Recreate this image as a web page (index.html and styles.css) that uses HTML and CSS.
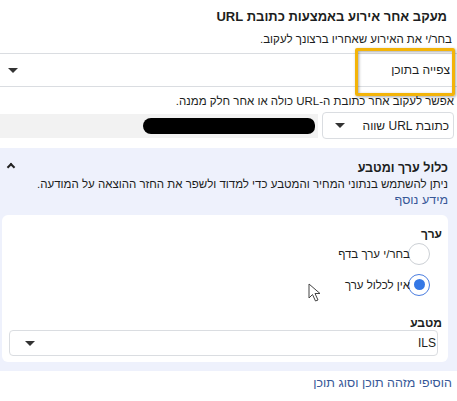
FILE: index.html
```html
<!DOCTYPE html>
<html lang="he" dir="rtl">

<head>
    <meta charset="UTF-8">
    <title>מעקב אחר אירוע</title>
    <link rel="stylesheet" href="styles.css">
</head>

<body>
    <div class="page">
        <h1 class="title">מעקב אחר אירוע באמצעות כתובת URL</h1>
        <p class="hint">בחר/י את האירוע שאחריו ברצונך לעקוב.</p>

        <!-- event picker -->
        <div class="event-select">
            <span class="value">צפייה בתוכן</span>
            <span class="caret"></span>
            <div class="highlight"></div>
        </div>

        <p class="hint url-hint">אפשר לעקוב אחר כתובת ה-URL כולה או אחר חלק ממנה.</p>

        <div class="url-row">
            <div class="rule-select">
                <span class="value">כתובת URL שווה</span>
                <span class="caret"></span>
            </div>
            <div class="url-input">
                <span class="redacted"></span>
            </div>
        </div>

        <!-- value & currency -->
        <section class="value-panel">
            <div class="panel-head">
                <div>
                    <h3>כלול ערך ומטבע</h3>
                    <p>ניתן להשתמש בנתוני המחיר והמטבע כדי למדוד ולשפר את החזר ההוצאה על המודעה.</p>
                    <a href="#" class="link">מידע נוסף</a>
                </div>
                <span class="chevron"></span>
            </div>

            <div class="card">
                <h4>ערך</h4>
                <label class="radio first">
                    <span class="dot"></span>
                    <span>בחר/י ערך בדף</span>
                </label>
                <label class="radio checked">
                    <span class="dot"></span>
                    <span>אין לכלול ערך</span>
                </label>
                <svg class="cursor" width="14" height="20" viewBox="0 0 14 20">
                    <path d="M1 1 L1 15 L4.5 11.5 L7.5 18 L10 17 L7 10.5 L12 10.5 Z" fill="#fff" stroke="#444" stroke-width="1" stroke-linejoin="round"/>
                </svg>

                <h4 class="currency-label">מטבע</h4>
                <div class="currency-select">
                    <span class="value">ILS</span>
                    <span class="caret"></span>
                </div>
            </div>
        </section>

        <a href="#" class="link add-link">הוסיפי מזהה תוכן וסוג תוכן</a>
    </div>
</body>

</html>
```

FILE: styles.css
```css
* {
    margin: 0;
    padding: 0;
    box-sizing: border-box;
}

body {
    background-color: #fff;
    font-family: "Liberation Sans", Arial, sans-serif;
    color: #1c1e21;
    font-size: 11.5px;
    width: 457px;
    overflow: hidden;
}

.page {
    padding-top: 7px;
}

.title {
    font-size: 13px;
    font-weight: bold;
    margin-right: 10px;
    line-height: 20px;
}

.hint {
    line-height: 16px;
    margin-right: 5px;
}

.title + .hint {
    margin-top: 4px;
}

.caret {
    width: 0;
    height: 0;
    border-left: 5px solid transparent;
    border-right: 5px solid transparent;
    border-top: 5px solid #333;
}

.event-select {
    position: relative;
    margin-top: 6px;
    height: 34px;
    border-top: 1px solid #dadde1;
    border-bottom: 1px solid #dadde1;
    display: flex;
    align-items: center;
    justify-content: space-between;
    padding: 0 7px 0 9px;
    margin-left: -1px;
    font-size: 12px;
}

.highlight {
    position: absolute;
    top: -6px;
    right: 2px;
    width: 100px;
    height: 48px;
    border: 3px solid #f3b409;
    border-radius: 2px;
    box-shadow: 1px 1px 3px rgba(0, 0, 0, 0.35), inset 1px 1px 3px rgba(0, 0, 0, 0.35);
}

.url-hint {
    margin-top: 6px;
    margin-right: 3px;
}

.url-row {
    display: flex;
    align-items: center;
    margin-top: 3px;
    gap: 4px;
    padding-right: 3px;
}

.rule-select {
    width: 132px;
    height: 27px;
    border: 1px solid #dadde1;
    border-radius: 4px;
    background-color: #fff;
    display: flex;
    align-items: center;
    justify-content: space-between;
    padding: 0 4px 0 12px;
    font-size: 12px;
}

.url-input {
    flex: 1;
    height: 24px;
    background-color: #f2f2f2;
    display: flex;
    align-items: center;
}

.redacted {
    width: 172px;
    height: 16px;
    margin-right: 3px;
    background-color: #000;
    border-radius: 9px 8px 8px 9px;
}

.value-panel {
    margin-top: 9px;
    background-color: #eef1fc;
    padding: 12px 9px 9px 0;
}

.panel-head {
    display: flex;
    justify-content: space-between;
    align-items: flex-start;
    margin-bottom: 7px;
}

.panel-head h3 {
    font-size: 12.5px;
    font-weight: bold;
    line-height: 16px;
}

.panel-head p {
    line-height: 16px;
}

.chevron {
    width: 6px;
    height: 6px;
    border-top: 2px solid #222;
    border-left: 2px solid #222;
    transform: rotate(45deg);
    margin: 4px 0 0 8px;
}

.link {
    color: #385898;
    text-decoration: none;
    font-size: 12.5px;
    line-height: 16px;
    display: inline-block;
}

.card {
    position: relative;
    background-color: #fff;
    border-radius: 6px;
    margin-left: 2px;
    padding: 11px 6px 6px 7px;
}

.card h4 {
    font-size: 12px;
    font-weight: bold;
    line-height: 16px;
}

.radio {
    display: flex;
    align-items: center;
    height: 31px;
    margin-right: 12px;
    font-size: 11.5px;
}

.radio.first {
    margin-top: -4px;
}

.radio .dot {
    width: 22px;
    height: 22px;
    border-radius: 50%;
    border: 1px solid #ccd0d5;
    margin-left: -2px;
    display: flex;
    align-items: center;
    justify-content: center;
    background-color: #fff;
}

.radio.checked .dot {
    border-color: #4a7de0;
}

.radio.checked .dot::after {
    content: "";
    width: 11px;
    height: 11px;
    border-radius: 50%;
    background-color: #3578e5;
}

.cursor {
    position: absolute;
    top: 68px;
    left: 306px;
}

.currency-label.currency-label {
    margin-top: 16px;
    line-height: 14px;
}

.currency-select {
    height: 26px;
    margin-right: 4px;
    border: 1px solid #dadde1;
    border-radius: 4px;
    display: flex;
    align-items: center;
    justify-content: space-between;
    padding: 0 1px 0 15px;
    font-size: 12px;
}

.add-link {
    margin: 4px 5px 0 0;
}
```
